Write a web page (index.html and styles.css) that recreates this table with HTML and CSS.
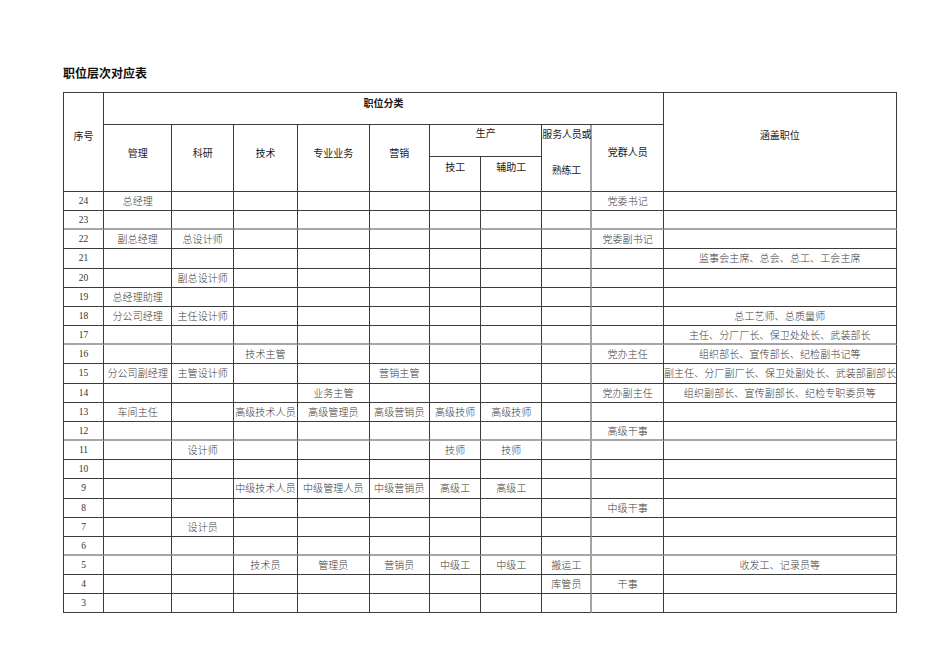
FILE: index.html
```html
<!DOCTYPE html>
<html lang="zh-CN">
<head>
<meta charset="utf-8">
<title>职位层次对应表</title>
<link rel="stylesheet" href="styles.css">
</head>
<body>
<div class="page">
  <h1 class="title">职位层次对应表</h1>
  <div class="grid">
    <div class="h h-seq">序号</div>
    <div class="h h-cat">职位分类</div>
    <div class="h h-cover">涵盖职位</div>
    <div class="h h-sub c2">管理</div>
    <div class="h h-sub c3">科研</div>
    <div class="h h-sub c4">技术</div>
    <div class="h h-sub c5">专业业务</div>
    <div class="h h-sub c6">营销</div>
    <div class="h h-prod">生产</div>
    <div class="h h-serv"><div>服务人员或</div><div class="l2">熟练工</div></div>
    <div class="h h-party">党群人员</div>
    <div class="h h-tech">技工</div>
    <div class="h h-aux">辅助工</div>

    <div class="r"><div class="n">24</div><div>总经理</div><div></div><div></div><div></div><div></div><div></div><div></div><div></div><div>党委书记</div><div></div></div>
    <div class="r sep"><div class="n">23</div><div></div><div></div><div></div><div></div><div></div><div></div><div></div><div></div><div></div><div></div></div>
    <div class="r"><div class="n">22</div><div>副总经理</div><div>总设计师</div><div></div><div></div><div></div><div></div><div></div><div></div><div>党委副书记</div><div></div></div>
    <div class="r"><div class="n">21</div><div></div><div></div><div></div><div></div><div></div><div></div><div></div><div></div><div></div><div>监事会主席、总会、总工、工会主席</div></div>
    <div class="r"><div class="n">20</div><div></div><div>副总设计师</div><div></div><div></div><div></div><div></div><div></div><div></div><div></div><div></div></div>
    <div class="r"><div class="n">19</div><div>总经理助理</div><div></div><div></div><div></div><div></div><div></div><div></div><div></div><div></div><div></div></div>
    <div class="r"><div class="n">18</div><div>分公司经理</div><div>主任设计师</div><div></div><div></div><div></div><div></div><div></div><div></div><div></div><div>总工艺师、总质量师</div></div>
    <div class="r sep"><div class="n">17</div><div></div><div></div><div></div><div></div><div></div><div></div><div></div><div></div><div></div><div>主任、分厂厂长、保卫处处长、武装部长</div></div>
    <div class="r"><div class="n">16</div><div></div><div></div><div>技术主管</div><div></div><div></div><div></div><div></div><div></div><div>党办主任</div><div>组织部长、宣传部长、纪检副书记等</div></div>
    <div class="r"><div class="n">15</div><div>分公司副经理</div><div>主管设计师</div><div></div><div></div><div>营销主管</div><div></div><div></div><div></div><div></div><div>副主任、分厂副厂长、保卫处副处长、武装部副部长</div></div>
    <div class="r"><div class="n">14</div><div></div><div></div><div></div><div>业务主管</div><div></div><div></div><div></div><div></div><div>党办副主任</div><div>组织副部长、宣传副部长、纪检专职委员等</div></div>
    <div class="r"><div class="n">13</div><div>车间主任</div><div></div><div>高级技术人员</div><div>高级管理员</div><div>高级营销员</div><div>高级技师</div><div>高级技师</div><div></div><div></div><div></div></div>
    <div class="r sep"><div class="n">12</div><div></div><div></div><div></div><div></div><div></div><div></div><div></div><div></div><div>高级干事</div><div></div></div>
    <div class="r"><div class="n">11</div><div></div><div>设计师</div><div></div><div></div><div></div><div>技师</div><div>技师</div><div></div><div></div><div></div></div>
    <div class="r"><div class="n">10</div><div></div><div></div><div></div><div></div><div></div><div></div><div></div><div></div><div></div><div></div></div>
    <div class="r"><div class="n">9</div><div></div><div></div><div>中级技术人员</div><div>中级管理人员</div><div>中级营销员</div><div>高级工</div><div>高级工</div><div></div><div></div><div></div></div>
    <div class="r"><div class="n">8</div><div></div><div></div><div></div><div></div><div></div><div></div><div></div><div></div><div>中级干事</div><div></div></div>
    <div class="r"><div class="n">7</div><div></div><div>设计员</div><div></div><div></div><div></div><div></div><div></div><div></div><div></div><div></div></div>
    <div class="r sep"><div class="n">6</div><div></div><div></div><div></div><div></div><div></div><div></div><div></div><div></div><div></div><div></div></div>
    <div class="r"><div class="n">5</div><div></div><div></div><div>技术员</div><div>管理员</div><div>营销员</div><div>中级工</div><div>中级工</div><div>搬运工</div><div></div><div>收发工、记录员等</div></div>
    <div class="r"><div class="n">4</div><div></div><div></div><div></div><div></div><div></div><div></div><div></div><div>库管员</div><div>干事</div><div></div></div>
    <div class="r"><div class="n">3</div><div></div><div></div><div></div><div></div><div></div><div></div><div></div><div></div><div></div><div></div></div>
  </div>
</div>
</body>
</html>
```

FILE: styles.css
```css
html, body {
  margin: 0;
  padding: 0;
  background: #ffffff;
}

.page {
  padding: 65px 0 0 63px;
  font-family: "Liberation Serif", "Noto Sans CJK SC", serif;
}

.title {
  margin: 0 0 11px 0;
  font-family: "Noto Sans CJK SC", sans-serif;
  font-size: 12px;
  line-height: 16px;
  font-weight: 700;
  color: #111;
}

.grid {
  display: grid;
  width: 834px;
  box-sizing: border-box;
  grid-template-columns: 40px 68.4px 61.6px 64px 71.7px 60.3px 51.4px 61px 50px 71.6px 232.7px;
  grid-template-rows: 32px 32px 35px repeat(22, 19.17px);
  border-left: 1px solid #3c3c3c;
  border-top: 1px solid #3c3c3c;
}

.grid > div,
.r > div {
  box-sizing: border-box;
  border-right: 1px solid #3c3c3c;
  border-bottom: 1px solid #3c3c3c;
  min-width: 0;
}

/* header cells */
.h {
  font-family: "Noto Sans CJK SC", sans-serif;
  font-size: 10px;
  line-height: 12px;
  color: #1a1a1a;
  text-align: center;
  white-space: nowrap;
}

.h-seq   { grid-column: 1; grid-row: 1 / 4; padding-top: 37px; }
.h-cat   { grid-column: 2 / 11; grid-row: 1; padding-top: 4px; font-weight: 700; }
.h-cover { grid-column: 11; grid-row: 1 / 4; padding-top: 36px; }
.h-sub   { grid-row: 2 / 4; padding-top: 22px; }
.c2 { grid-column: 2; }
.c3 { grid-column: 3; }
.c4 { grid-column: 4; }
.c5 { grid-column: 5; }
.c6 { grid-column: 6; }
.h-prod  { grid-column: 7 / 9; grid-row: 2; padding-top: 2px; }
.h-serv  {
  grid-column: 9; grid-row: 2 / 4; padding-top: 3px;
  letter-spacing: -0.2px;
  border-right: 2px solid #a4a4a4 !important;
}
.h-serv .l2 { margin-top: 24px; }
.h-party { grid-column: 10; grid-row: 2 / 4; padding-top: 21px; }
.h-tech  { grid-column: 7; grid-row: 3; padding-top: 4px; }
.h-aux   { grid-column: 8; grid-row: 3; padding-top: 4px; }

/* body rows */
.r {
  display: contents;
}

.r > div {
  font-family: "Noto Sans CJK SC", sans-serif;
  font-size: 10px;
  line-height: 18px;
  font-weight: 300;
  letter-spacing: 0.1px;
  color: #3a3a3a;
  text-align: center;
  white-space: nowrap;
  overflow: hidden;
}

.r > div.n {
  font-family: "Liberation Serif", serif;
  font-size: 9.5px;
  letter-spacing: 0;
  color: #333;
}

.r > div:nth-child(9) {
  border-right: 2px solid #a4a4a4;
}

.r.sep > div {
  border-bottom: 2px solid #a6a6a6;
}
```
